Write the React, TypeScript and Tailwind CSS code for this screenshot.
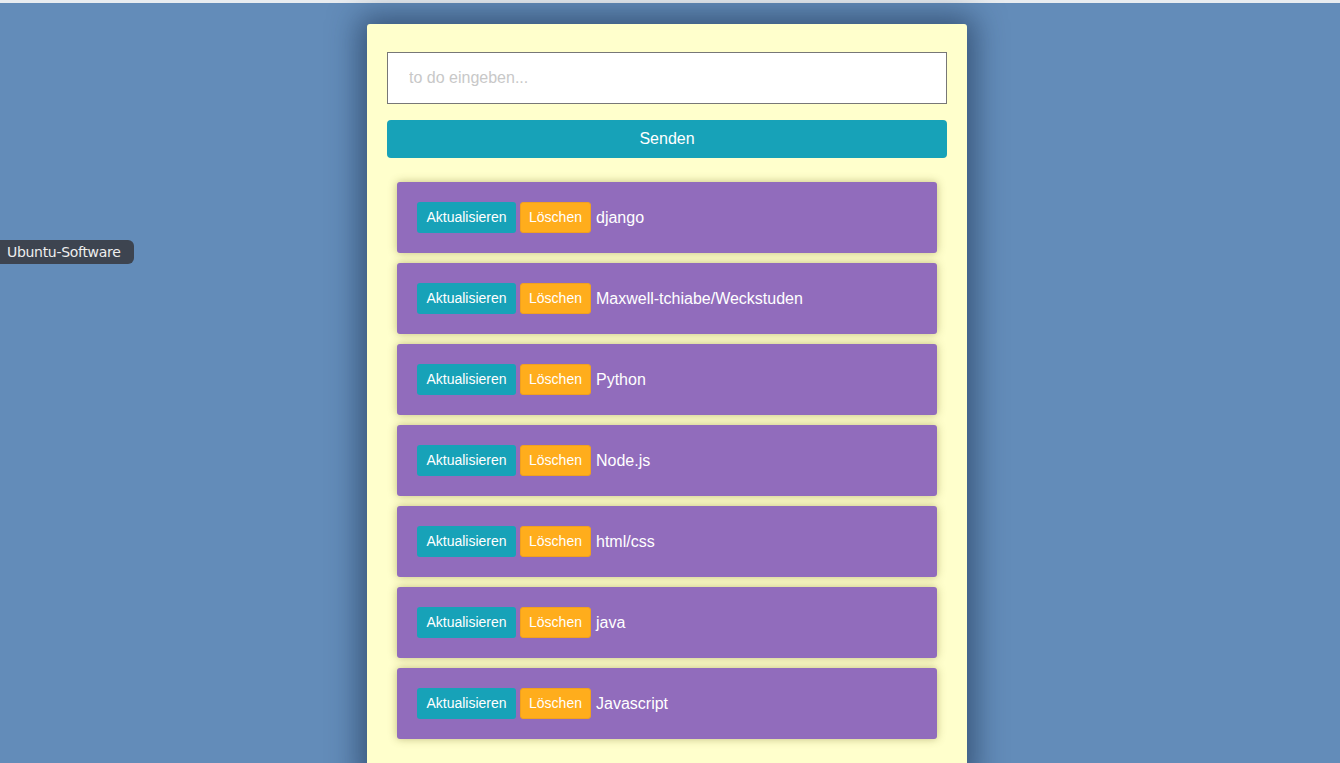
import React from 'react';

const todos = ['django', 'Maxwell-tchiabe/Weckstuden', 'Python', 'Node.js', 'html/css', 'java', 'Javascript'];

const TodoItem: React.FC<{ text: string }> = ({ text }) => (
  <li className="mx-[10px] flex h-[71px] items-center rounded-[3px] bg-[#916cbc] px-5 shadow-[0_0_8px_rgba(120,110,40,0.45)]">
    <button className="h-[31px] w-[99px] rounded-[3px] bg-[#17a2b8] text-[14px] text-white">Aktualisieren</button>
    <button className="ml-[4px] h-[31px] w-[71px] rounded-[3px] border border-[#f0a020] bg-[#ffad1c] text-[14px] text-white">Löschen</button>
    <span className="ml-[5px] text-[16px] text-white">{text}</span>
  </li>
);

export default function App() {
  return (
    <div className="relative h-[763px] overflow-hidden bg-[#638cb9] font-['Liberation_Sans',Arial,sans-serif]">
      <div className="h-[3px] bg-[#e8ecf0]" />
      <div className="flex justify-center pr-[6px] pt-[21px]">
        <div className="w-[600px] rounded-t-[3px] bg-[#ffffcc] px-5 pt-[28px] pb-10 shadow-[0_0_30px_8px_rgba(20,40,70,0.55)]">
          <input
            className="h-[52px] w-full border border-[#777] bg-white px-[21px] text-[16px] outline-none placeholder:text-[#c8c8c8]"
            placeholder="to do eingeben..."
          />
          <button className="mt-4 h-[38px] w-full rounded-[4px] bg-[#17a2b8] text-[16px] text-white">Senden</button>
          <ul className="mt-6 flex flex-col gap-[10px]">
            {todos.map((t) => (
              <TodoItem key={t} text={t} />
            ))}
          </ul>
        </div>
      </div>
      <div className="absolute left-0 top-[240px] flex h-[24px] w-[134px] items-center rounded-r-[6px] bg-[#3d4450] pl-[7px] font-['DejaVu_Sans',sans-serif] text-[14px] tracking-[-0.3px] text-[#eeeeee]">
        Ubuntu-Software
      </div>
    </div>
  );
}
